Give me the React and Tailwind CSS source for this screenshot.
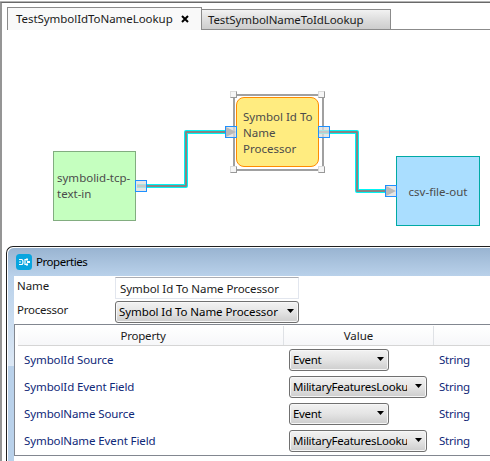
import React from "react";

function Combo({ label, className, textClass = "" }) {
  return (
    <div
      className={`flex h-[22px] shrink-0 items-center rounded-[3px] border border-[#707070] bg-linear-to-b from-[#f2f2f2] from-0% via-[#e4e4e4] via-50% to-[#cdcdcd] pl-[3px] pr-[4px] text-black shadow-[inset_0_0_0_1px_#f7f7f7] ${className}`}
    >
      <div className={`flex-1 overflow-hidden whitespace-nowrap leading-[18px] ${textClass}`}>{label}</div>
      <svg width="7" height="4" viewBox="0 0 7 4" className="-mt-[2px] shrink-0">
        <path d="M0 0H7L3.5 4Z" fill="#000" />
      </svg>
    </div>
  );
}

function Handle({ className }) {
  return (
    <div className={`absolute h-[7px] w-[7px] border border-b-[#999] border-l-[#ddd] border-r-[#999] border-t-[#ddd] bg-[#f6f6f6] ${className}`} />
  );
}

function Port({ className, arrow }) {
  return (
    <div className={`absolute h-[12px] w-[12px] border border-[#1e90ff] bg-[#dcdcdc]/75 ${className}`}>
      {arrow && (
        <svg width="10" height="10" viewBox="0 0 10 10" className="block">
          <path d="M0 0L10 5L0 10Z" fill="#b9b9b9" />
        </svg>
      )}
    </div>
  );
}

function Wire({ d }) {
  return (
    <g fill="none" strokeLinejoin="round">
      <path d={d} stroke="#00f5f5" strokeWidth="4" />
      <path d={d} stroke="#858585" strokeWidth="2" />
    </g>
  );
}

const rows = [
  { name: "SymbolId Source", value: "Event", wide: false },
  { name: "SymbolId Event Field", value: "MilitaryFeaturesLookup", wide: true },
  { name: "SymbolName Source", value: "Event", wide: false },
  { name: "SymbolName Event Field", value: "MilitaryFeaturesLookup", wide: true },
];

function Tabs() {
  return (
    <div className="flex h-[27px] items-end pl-[5px]">
      <div className="flex h-[23px] w-[195px] items-center border border-b-0 border-[#8b8b8b] bg-[#f9f9f9] pl-[8px] tracking-[-0.05px]">
        <span className="w-[165px] whitespace-nowrap">TestSymbolIdToNameLookup</span>
        <svg width="8" height="8" viewBox="0 0 8 8">
          <path d="M1 1L7 7M7 1L1 7" stroke="#000" strokeWidth="2" />
        </svg>
      </div>
      <div className="flex h-[23px] flex-1 items-end border-b border-[#8b8b8b] pb-px">
        <div className="-mb-px flex h-[20px] w-[189px] items-center whitespace-nowrap border-r border-t border-[#8b8b8b] bg-linear-to-b from-[#f2f2f2] from-0% via-[#dedede] via-50% to-[#cdcdcd] pl-[6px] tracking-[-0.1px]">
          TestSymbolNameToIdLookup
        </div>
      </div>
    </div>
  );
}

function Diagram() {
  return (
    <div className="relative h-[216px]">
      <div className="absolute left-[51px] top-[121px] flex h-[70px] w-[83px] items-center border border-[#82ad80] bg-[#c5ffbf] pl-[3px] leading-[16px] text-[#4b4b4b]">
        <div className="whitespace-nowrap">symbolid-tcp-<br />text-in</div>
      </div>
      <div className="absolute left-[231px] top-[64px] h-[77px] w-[91px] border-2 border-[#a0a0a0]" />
      <div className="absolute left-[234px] top-[67px] flex h-[70px] w-[83px] items-center rounded-[8px] border border-[#ff8c00] bg-[#ffec80] pl-[6px] pt-[2px] leading-[16px] text-[#4b4b4b]">
        <div className="whitespace-nowrap">Symbol Id To<br />Name<br />Processor</div>
      </div>
      <div className="absolute left-[394px] top-[126px] flex h-[70px] w-[84px] items-center justify-center border border-[#00aaa5] bg-[#aadeff] pt-[2px] text-[#4b4b4b]">
        csv-file-out
      </div>
      <Handle className="left-[228px] top-[61px]" />
      <Handle className="left-[316px] top-[61px]" />
      <Handle className="left-[228px] top-[136px]" />
      <Handle className="left-[316px] top-[136px]" />
      <svg className="absolute left-0 top-0" width="488" height="216" viewBox="0 0 488 216">
        <Wire d="M135 156H184V102H228" />
        <Wire d="M317 102H355V161H390" />
      </svg>
      <Port className="left-[133px] top-[150px]" />
      <Port className="left-[223px] top-[96px]" arrow />
      <Port className="left-[316px] top-[96px]" />
      <Port className="left-[383px] top-[155px]" arrow />
    </div>
  );
}

function PropertiesWindow() {
  return (
    <div className="ml-[4px] flex h-[215px] flex-col overflow-hidden rounded-tl-[7px] border-l border-t border-[#202020] bg-white pl-px pt-px">
      <div className="flex flex-1 flex-col overflow-hidden rounded-tl-[6px] bg-[linear-gradient(#b9d1ea_28px,#dce8f5_118px,#b9d1ea_118px)]">
        <div className="flex h-[28px] shrink-0 items-center bg-linear-to-b from-[#99b4d1] to-[#b9d1ea] pl-[8px]">
          <svg width="16" height="16" viewBox="0 0 16 16">
            <rect width="16" height="16" rx="3.5" fill="#08a5df" />
            <path d="M3 5.500H5.500Q7 5.500 7 8Q7 10.500 5.500 10.500H3M3 8H5M10.500 5.500H9V10.500H10.500" stroke="#fff" strokeWidth="1.200" fill="none" />
            <path d="M10 4.500h2v2h-2zM11 7h3v2h-3zM10 9.500h2v2h-2z" fill="#fff" />
          </svg>
          <span className="ml-[4px] text-black tracking-[-0.45px]">Properties</span>
        </div>
        <div className="ml-[6px] flex flex-1 flex-col bg-white">
          <div className="flex h-[24px] pl-[3px] pt-px">
            <span className="w-[98px] leading-[18px] tracking-[-0.1px]">Name</span>
            <div className="h-[22px] w-[184px] whitespace-nowrap border border-[#e2e6ee] border-t-[#abadb3] pl-[4px] leading-[22px] tracking-[-0.08px]">
              Symbol Id To Name Processor
            </div>
          </div>
          <div className="flex h-[24px] pl-[3px] pt-px">
            <span className="w-[98px] leading-[18px] tracking-[-0.25px]">Processor</span>
            <Combo label="Symbol Id To Name Processor" className="w-[184px]" textClass="tracking-[-0.08px]" />
          </div>
          <div className="flex h-[132px] flex-col border-y border-l border-[#828790] pl-[3px] pt-px">
            <div className="flex h-[20px] shrink-0 border-b border-[#d5d5d5] bg-linear-to-b from-white to-[#f6f7f9] leading-[20px]">
              <div className="w-[266px] border-r border-[#dfe2e6] pr-[15px] text-center tracking-[-0.2px]">Property</div>
              <div className="w-[150px] border-r border-[#dfe2e6] text-center">Value</div>
            </div>
            {rows.map((r) => (
              <div key={r.name} className="flex h-[27px] shrink-0 items-center pt-px pl-[6px] text-[#0f2878]">
                <span className="w-[265px] whitespace-nowrap tracking-[-0.1px]">{r.name}</span>
                <div className="w-[150px]">
                  <Combo label={r.value} className={r.wide ? "w-[138px]" : "w-[100px]"} textClass={r.wide ? "mr-[8px] tracking-[-0.25px]" : "tracking-[-0.35px]"} />
                </div>
                <span className="tracking-[-0.25px]">String</span>
              </div>
            ))}
          </div>
        </div>
      </div>
    </div>
  );
}

export default function App() {
  return (
    <div className="h-[461px] w-[490px] overflow-hidden bg-white pt-px font-['Noto_Sans',sans-serif] text-[11.5px] text-[#1a1a1a]">
      <div className="h-px bg-[#b5b5b5]" />
      <div className="h-[459px] border-l-2 border-t border-l-[#959595] border-t-[#696969]">
        <Tabs />
        <Diagram />
        <PropertiesWindow />
      </div>
    </div>
  );
}
